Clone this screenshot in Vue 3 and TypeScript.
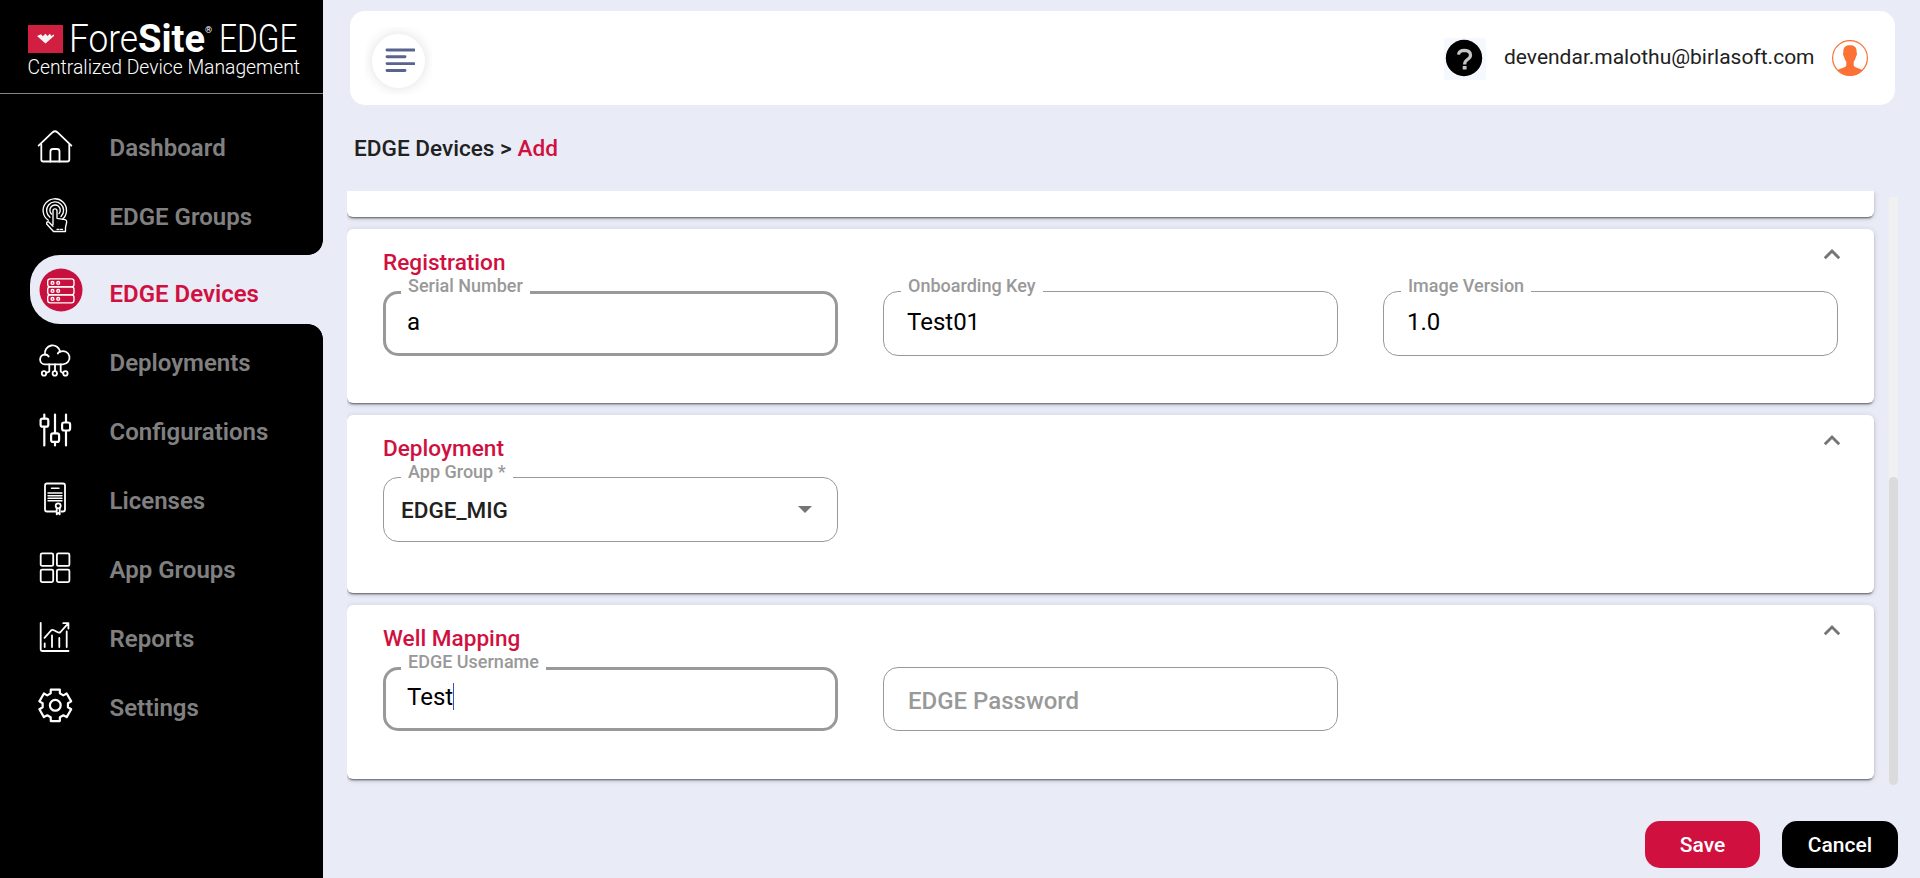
<script setup lang="ts">
import { ref } from 'vue'

interface NavItem {
  id: string
  label: string
}

interface Field {
  label: string
  value: string
  kind: 'text' | 'select'
  focused?: boolean
  caret?: boolean
}

interface Section {
  title: string
  size: string
  fields: Field[]
}

const navItems: NavItem[] = [
  { id: 'dashboard', label: 'Dashboard' },
  { id: 'groups', label: 'EDGE Groups' },
  { id: 'devices', label: 'EDGE Devices' },
  { id: 'deployments', label: 'Deployments' },
  { id: 'configurations', label: 'Configurations' },
  { id: 'licenses', label: 'Licenses' },
  { id: 'apps', label: 'App Groups' },
  { id: 'reports', label: 'Reports' },
  { id: 'settings', label: 'Settings' },
]

const active = ref('devices')

const sections: Section[] = [
  {
    title: 'Registration',
    size: 'registration',
    fields: [
      { label: 'Serial Number', value: 'a', kind: 'text', focused: true },
      { label: 'Onboarding Key', value: 'Test01', kind: 'text' },
      { label: 'Image Version', value: '1.0', kind: 'text' },
    ],
  },
  {
    title: 'Deployment',
    size: 'deployment',
    fields: [{ label: 'App Group *', value: 'EDGE_MIG', kind: 'select' }],
  },
  {
    title: 'Well Mapping',
    size: 'mapping',
    fields: [
      { label: 'EDGE Username', value: 'Test', kind: 'text', focused: true, caret: true },
      { label: 'EDGE Password', value: '', kind: 'text' },
    ],
  },
]

// Outline of a six-toothed cog centred in the settings icon.
function cogPath(cx: number, cy: number, outer: number, inner: number): string {
  const points: string[] = []
  for (let i = 0; i < 6; i++) {
    const mid = -90 + i * 60
    const steps: [number, number][] = [
      [-21, inner],
      [-16, outer],
      [16, outer],
      [21, inner],
    ]
    for (const [offset, radius] of steps) {
      const a = ((mid + offset) * Math.PI) / 180
      points.push(`${(cx + radius * Math.cos(a)).toFixed(2)} ${(cy + radius * Math.sin(a)).toFixed(2)}`)
    }
  }
  return `M${points.join('L')}Z`
}
const cog = cogPath(22.3, 21.3, 16.4, 12.8)
</script>

<template>
  <div class="app">
    <aside class="sidebar">
      <div class="brand">
        <svg class="logo" width="290" height="70" viewBox="0 0 290 70" role="img">
          <rect x="8" y="15" width="35" height="28" fill="#d01f41" />
          <path d="M17 26l4-1.8 1.8 2 2.6-2.4 2.2 2.2 2.2-2.2 1.8 2.200 2.400-1.800L34 26l-8.500 7.400z" fill="#f4f4f4" />
          <g fill="#fff">
            <text class="light" x="49" y="42.300" font-size="38.500" textLength="69" lengthAdjust="spacingAndGlyphs">Fore</text>
            <text class="heavy" x="118" y="42.300" font-size="38.500" textLength="67" lengthAdjust="spacingAndGlyphs">Site</text>
            <text x="185" y="22.500" font-size="9">®</text>
            <text class="light" x="199" y="42.300" font-size="38.500" textLength="78.500" lengthAdjust="spacingAndGlyphs">EDGE</text>
            <text class="sub" x="7.500" y="64" font-size="20.500" textLength="272.500" lengthAdjust="spacingAndGlyphs">Centralized Device Management</text>
          </g>
        </svg>
      </div>

      <nav class="nav">
        <a v-for="item in navItems" :key="item.id" class="nav-item" :class="{ active: item.id === active }">
          <svg class="nav-icon" width="44" height="44" viewBox="0 0 44 44">
            <g v-if="item.id === 'dashboard'">
              <path d="M5.600 21.600L19.700 8.200Q22 6.200 24.300 8.200L38.400 21.600" />
              <path d="M8.300 20.500V35.500Q8.300 37.500 10.300 37.500H34.300Q36.300 37.500 36.300 35.500V20.500" />
              <path d="M17.400 37.500V27.500Q17.400 25 20 25H24Q26.500 25 26.500 27.500V37.500" />
            </g>
            <g v-else-if="item.id === 'groups'" class="fine">
              <path d="M15.300 27.200A11.700 11.700 0 1 1 29.500 26.300" />
              <path d="M17 24.200A8.500 8.500 0 1 1 28 23.500" />
              <path d="M18.500 21A5.200 5.200 0 1 1 26 20.600" />
              <path d="M20 31.500V17.800a2 2 0 0 1 4 0V25.300L32 26.700Q33.800 27 33.700 29L32.500 34.500V38.500H20.500L13.700 31Q13.200 28.500 15.500 28.800L20 33.300" />
              <path d="M24 36.300h2m1.500 0h2" />
            </g>
            <g v-else-if="item.id === 'devices'" class="fine">
              <circle class="disc" cx="22" cy="22" r="21.500" />
              <rect x="8.700" y="10.900" width="26.300" height="8" rx="2.600" />
              <rect x="8.700" y="18.900" width="26.300" height="8" rx="2.600" />
              <rect x="8.700" y="26.900" width="26.300" height="8" rx="2.600" />
              <circle cx="13.500" cy="14.900" r="1.400" />
              <circle cx="19.200" cy="14.900" r="1.400" />
              <circle cx="13.500" cy="22.900" r="1.400" />
              <circle cx="19.200" cy="22.900" r="1.400" />
              <circle cx="13.500" cy="30.900" r="1.400" />
              <circle cx="19.200" cy="30.900" r="1.400" />
            </g>
            <g v-else-if="item.id === 'deployments'">
              <path d="M12 25.300A4.900 4.900 0 0 1 12 15.500A7.700 7.700 0 0 1 27.200 12.700A6.600 6.600 0 1 1 30 25.300Z" />
              <path d="M12 15.500Q14.500 15.500 15.700 17.500M27.200 12.700Q25.500 13.200 24.800 14.500" />
              <path d="M16.300 25.500V32.500L13.300 34M22 25.500V32M27.700 25.500V32.500L30 34" />
              <circle cx="11" cy="34.400" r="2.200" />
              <circle cx="21.800" cy="34.400" r="2.200" />
              <circle cx="32.400" cy="34.400" r="2.200" />
            </g>
            <g v-else-if="item.id === 'configurations'" class="bold">
              <path d="M11.300 6.500V10.500M11.300 19V37.500M22 6.500V25M22 34V37.500M33 6.500V14M33 23V37.500" />
              <rect x="7.600" y="10.700" width="7.700" height="8" rx="2" />
              <rect x="18.100" y="25.400" width="8" height="8.500" rx="2" />
              <rect x="29.100" y="14.500" width="8" height="8" rx="2" />
            </g>
            <g v-else-if="item.id === 'licenses'">
              <path d="M22.500 34.500H14Q12 34.500 12 32.500V8.500Q12 6.500 14 6.500H30Q32 6.500 32 8.500V32.500Q32 34.500 30 34.500H28.500" />
              <path d="M18.500 11.300H26M15 16H29M15 18.700H29M15 21.300H29M15 23.700H29" stroke-width="1.400" />
              <circle cx="25.200" cy="28.800" r="2.500" />
              <path d="M23.700 31.500V37.300L25.200 36L26.700 37.300V31.500" />
            </g>
            <g v-else-if="item.id === 'apps'">
              <rect x="7.700" y="7.400" width="12.500" height="12.500" rx="1.500" />
              <rect x="23.900" y="7.400" width="12.500" height="12.500" rx="1.500" />
              <rect x="7.700" y="23.600" width="12.500" height="12.500" rx="1.500" />
              <rect x="23.900" y="23.600" width="12.500" height="12.500" rx="1.500" />
            </g>
            <g v-else-if="item.id === 'reports'">
              <path d="M7.700 8V34.500Q7.700 36 9.200 36H35.500" />
              <path d="M11.700 28.500V32M19 20.500V32M26.300 23V32M33.700 16.500V32" />
              <path d="M11.500 22.800L18 15.500Q19 14.500 20.300 15L25.300 17.500Q26.500 18 27.500 17L35 8.700M30.300 8.200H35.400V13.500" />
            </g>
            <g v-else class="bold">
              <path :d="cog" />
              <circle cx="22.300" cy="21.300" r="5.400" />
            </g>
          </svg>
          <span class="nav-label">{{ item.label }}</span>
        </a>
      </nav>
    </aside>

    <main class="main">
      <header class="topbar">
        <button class="menu-box" type="button">
          <span class="menu-disc">
            <svg width="30" height="26" viewBox="0 0 30 26">
              <path d="M2 3H29M2 9.800H20M2 16.600H29M2 23.500H20" stroke="#58648f" stroke-width="2.900" stroke-linecap="round" />
            </svg>
          </span>
        </button>
        <div class="account">
          <span class="help">
            <svg width="42" height="42" viewBox="0 0 42 42">
              <circle cx="20" cy="20" r="18.200" fill="#000" />
              <path d="M14.500 16.600Q15 12.400 20.500 12.400Q26.500 12.600 26.500 17.200Q26.500 19.500 23.500 21.500Q20.700 23.300 20.600 26.500" fill="none" stroke="#c4c4c4" stroke-width="3.200" />
              <rect x="18.700" y="28" width="3.900" height="3.600" rx=".6" fill="#c4c4c4" />
            </svg>
          </span>
          <span class="email">devendar.malothu@birlasoft.com</span>
          <svg class="avatar" width="36" height="36" viewBox="0 0 36 36">
            <circle cx="18" cy="18" r="17.400" fill="#fff" stroke="#fb7136" stroke-width="1.200" />
            <path d="M18 5.300C22.500 5.300 25 7.500 24.600 12.500C25.300 13 25 15.500 24 16.500C23.600 19 22.300 20.800 21.700 21.800V25.600C22.500 28 28 28.200 30.600 30.300A17.600 17.600 0 0 1 5.400 30.300C8 28.200 13.500 28 14.300 25.600V21.800C13.700 20.800 12.400 19 12 16.500C11 15.500 10.700 13 11.400 12.500C11 7.500 13.500 5.300 18 5.300Z" fill="#fb7136" />
          </svg>
        </div>
      </header>

      <h1 class="crumbs">EDGE Devices &gt; <span>Add</span></h1>

      <div class="scroller">
        <div class="cards">
          <section class="card tail"></section>
          <section v-for="s in sections" :key="s.title" class="card" :class="s.size">
            <svg class="chevron" width="18" height="12" viewBox="0 0 18 12">
              <path d="M1.800 10.200L9 3L16.200 10.200" fill="none" stroke="#757575" stroke-width="2.900" />
            </svg>
            <h2 class="card-title">{{ s.title }}</h2>
            <div class="fields">
              <fieldset v-for="f in s.fields" :key="f.label" class="field" :class="[f.kind, { focused: f.focused, empty: !f.value }]">
                <legend v-if="f.value" class="field-label">{{ f.label }}</legend>
                <div class="field-body">
                  <span v-if="f.value" class="value">{{ f.value }}</span>
                  <span v-else class="placeholder">{{ f.label }}</span>
                  <i v-if="f.caret" class="caret"></i>
                  <i v-if="f.kind === 'select'" class="arrow"></i>
                </div>
              </fieldset>
            </div>
          </section>
        </div>
        <div class="track"><div class="thumb"></div></div>
      </div>

      <footer class="actions">
        <button class="btn save" type="button">Save</button>
        <button class="btn cancel" type="button">Cancel</button>
      </footer>
    </main>
  </div>
</template>

<style>
body {
  margin: 0;
  overflow: hidden;
}
</style>

<style scoped>
.app {
  display: flex;
  width: 1920px;
  height: 878px;
  background: #e9ebf7;
  font-family: Roboto, "Liberation Sans", sans-serif;
  color: #212121;
  overflow: hidden;
}
.app * {
  box-sizing: border-box;
}
.sidebar {
  flex: none;
  width: 323px;
  height: 878px;
  background: #000;
}
.brand {
  height: 94px;
  padding: 10px 0 0 20px;
  border-bottom: 1px solid #858585;
}
.logo {
  display: block;
  overflow: visible;
}
.light {
  font-weight: 300;
}
.heavy {
  font-weight: 700;
}
.sub {
  font-weight: 350;
}
.nav {
  display: flex;
  flex-direction: column;
  padding-top: 15px;
}
.nav-item {
  display: flex;
  height: 69px;
  padding-left: 33px;
}
.nav-icon {
  flex: none;
  margin: 15px 32.5px 0 0;
  fill: none;
  stroke: #fff;
  stroke-width: 1.8;
  stroke-linecap: round;
  stroke-linejoin: round;
}
.nav-icon .fine {
  stroke-width: 1.35;
}
.nav-icon .bold {
  stroke-width: 2.2;
}
.nav-icon .disc {
  fill: #c8103f;
  stroke: none;
}
.nav-label {
  margin-top: 24px;
  font-size: 24px;
  line-height: 30px;
  font-weight: 600;
  color: #808080;
}
.nav-item.active {
  position: relative;
  margin: 8px 0 0 30px;
  padding-left: 8.5px;
  background: #e9ebf7;
  border-radius: 30px 0 0 30px;
}
.nav-item.active .nav-icon {
  margin: 12.5px 27px 0 0;
}
.nav-item.active .nav-label {
  color: #d0103f;
}
.nav-item.active::before,
.nav-item.active::after {
  content: "";
  position: absolute;
  right: 0;
  width: 15px;
  height: 15px;
}
.nav-item.active::before {
  top: -15px;
  background: radial-gradient(circle at 0 0, transparent 14.5px, #e9ebf7 15.2px);
}
.nav-item.active::after {
  bottom: -15px;
  background: radial-gradient(circle at 0 15px, transparent 14.5px, #e9ebf7 15.2px);
}
.main {
  flex: 1;
  display: flex;
  flex-direction: column;
  padding: 11px 22px 0 24px;
}
.topbar {
  display: flex;
  justify-content: space-between;
  width: 1545px;
  height: 94px;
  margin-left: 3px;
  padding: 16px 27px 0 15px;
  border-radius: 15px;
  background: #fff;
}
.menu-box {
  display: grid;
  place-items: center;
  width: 67px;
  height: 68px;
  padding: 0;
  border: 0;
  background: #fff;
  overflow: hidden;
}
.menu-disc {
  display: grid;
  place-items: center;
  width: 53px;
  height: 54px;
  padding: 0 0 2px 3px;
  border-radius: 50%;
  background: #fff;
  box-shadow: 0 0 13px rgba(0, 0, 0, 0.13);
}
.account {
  display: flex;
  align-items: flex-start;
  padding-top: 10.5px;
}
.help {
  width: 42px;
  height: 42px;
  border-radius: 3px;
  background: #f5f8fc;
}
.help svg {
  display: block;
}
.email {
  width: 310px;
  margin: 4px 18px 0 18px;
  font-size: 21px;
  line-height: 30px;
  white-space: nowrap;
}
.avatar {
  margin-top: 2.5px;
}
.crumbs {
  margin: 29px 0 0 7px;
  height: 57px;
  font-size: 22.6px;
  line-height: 30px;
  font-weight: 500;
}
.crumbs span {
  color: #d0103f;
}
.scroller {
  display: flex;
  width: 1551px;
  height: 594px;
}
.cards {
  display: flex;
  flex-direction: column;
  gap: 12px;
  width: 1542px;
  padding-right: 15px;
  overflow: hidden;
}
.card {
  position: relative;
  flex: none;
  padding: 19px 36px 0;
  border-radius: 6px;
  background: #fff;
  box-shadow: 0 3px 1px -2px rgba(0, 0, 0, 0.3), 0 2px 2px rgba(0, 0, 0, 0.22), 0 1px 6px rgba(0, 0, 0, 0.14);
}
.tail {
  height: 26px;
  border-radius: 0 0 6px 6px;
}
.registration,
.mapping {
  height: 174px;
}
.deployment {
  height: 178px;
}
.chevron {
  position: absolute;
  top: 18.5px;
  right: 33px;
}
.card-title {
  margin: 0;
  height: 30px;
  font-size: 22.6px;
  line-height: 30px;
  font-weight: 500;
  color: #d0103f;
}
.fields {
  display: grid;
  grid-template-columns: repeat(3, 455px);
  column-gap: 45px;
}
.field {
  min-width: 0;
  height: 78px;
  margin: 0;
  padding: 0 25px 0 17px;
  border: 1px solid #999;
  border-radius: 15px;
}
.mapping .field {
  height: 77px;
}
.field.focused {
  border-width: 3px;
  padding: 0 23px 0 15px;
}
.field-label {
  height: 27px;
  padding: 0 7px;
  font-size: 18px;
  line-height: 16px;
  font-weight: 500;
  color: #999;
}
.focused .field-label {
  height: 29px;
}
.field-body {
  display: flex;
  align-items: center;
  height: 33px;
  padding-left: 6px;
  font-size: 24px;
  line-height: 30px;
  color: #000;
}
.focused .field-body {
  height: 29px;
}
.mapping .focused .field-body {
  height: 27px;
}
.field.select .field-body {
  padding-left: 0;
  height: 37px;
  font-size: 22.5px;
  font-weight: 500;
  color: #212121;
}
.mapping .field.empty {
  height: 64px;
  margin-top: 13px;
}
.field.empty .field-body {
  height: 66px;
  padding-left: 7px;
  font-weight: 500;
  color: #999;
}
.caret {
  width: 1px;
  height: 27px;
  background: #3f51b5;
}
.arrow {
  margin-left: auto;
  border: 7px solid transparent;
  border-top-color: #757575;
  border-bottom: 0;
}
.track {
  display: flex;
  align-items: flex-end;
  width: 9px;
  height: 588px;
  margin-top: 6px;
  background: #f0f0f0;
  border-radius: 0 0 5px 5px;
}
.thumb {
  width: 9px;
  height: 308px;
  border-radius: 5px;
  background: #dbdbdb;
}
.actions {
  display: flex;
  justify-content: flex-end;
  gap: 22px;
  margin-top: 36px;
}
.btn {
  width: 115px;
  height: 47px;
  padding: 0;
  border: 0;
  border-radius: 15px;
  font-family: inherit;
  font-size: 21px;
  font-weight: 500;
  color: #fff;
}
.save {
  background: #d0103f;
}
.cancel {
  width: 116px;
  background: #000;
}
</style>
